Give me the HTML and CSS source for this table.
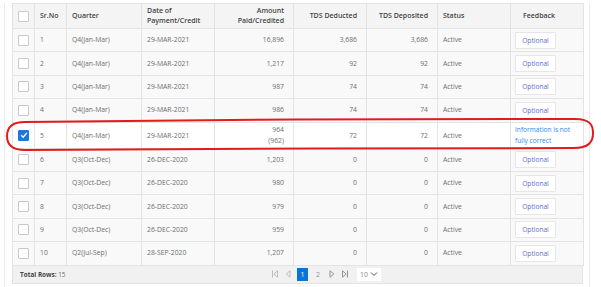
FILE: index.html
```html
<!DOCTYPE html>
<html>
<head>
<meta charset="utf-8">
<link rel="stylesheet" href="styles.css">
</head>
<body>
<div class="card">
  <table class="grid">
    <colgroup>
      <col class="c-cb"><col class="c-sr"><col class="c-q"><col class="c-d"><col class="c-a"><col class="c-t1"><col class="c-t2"><col class="c-s"><col class="c-f">
    </colgroup>
    <thead>
      <tr>
        <th class="cb-cell"><span class="cb"></span></th>
        <th>Sr.No</th>
        <th>Quarter</th>
        <th>Date of<br>Payment/Credit</th>
        <th class="num">Amount<br>Paid/Credited</th>
        <th class="num">TDS Deducted</th>
        <th class="num">TDS Deposited</th>
        <th>Status</th>
        <th class="fb-head">Feedback</th>
      </tr>
    </thead>
    <tbody>
      <tr><td class="cb-cell"><span class="cb"></span></td><td>1</td><td>Q4(Jan-Mar)</td><td>29-MAR-2021</td><td class="num">16,896</td><td class="num">3,686</td><td class="num">3,686</td><td>Active</td><td class="fb"><span class="btn">Optional</span></td></tr>
      <tr><td class="cb-cell"><span class="cb"></span></td><td>2</td><td>Q4(Jan-Mar)</td><td>29-MAR-2021</td><td class="num">1,217</td><td class="num">92</td><td class="num">92</td><td>Active</td><td class="fb"><span class="btn">Optional</span></td></tr>
      <tr><td class="cb-cell"><span class="cb"></span></td><td>3</td><td>Q4(Jan-Mar)</td><td>29-MAR-2021</td><td class="num">987</td><td class="num">74</td><td class="num">74</td><td>Active</td><td class="fb"><span class="btn">Optional</span></td></tr>
      <tr><td class="cb-cell"><span class="cb"></span></td><td>4</td><td>Q4(Jan-Mar)</td><td>29-MAR-2021</td><td class="num">986</td><td class="num">74</td><td class="num">74</td><td>Active</td><td class="fb"><span class="btn">Optional</span></td></tr>
      <tr class="sel"><td class="cb-cell"><span class="cb on"><svg viewBox="0 0 10 10" width="10" height="10"><path d="M2.2 5.2 L4.2 7.2 L7.9 2.9" fill="none" stroke="#fff" stroke-width="1.4"/></svg></span></td><td>5</td><td>Q4(Jan-Mar)</td><td>29-MAR-2021</td><td class="num">964<br>(962)</td><td class="num">72</td><td class="num">72</td><td>Active</td><td class="fb fb-link">Information is not<br>fully correct</td></tr>
      <tr><td class="cb-cell"><span class="cb"></span></td><td>6</td><td>Q3(Oct-Dec)</td><td>26-DEC-2020</td><td class="num">1,203</td><td class="num">0</td><td class="num">0</td><td>Active</td><td class="fb"><span class="btn">Optional</span></td></tr>
      <tr><td class="cb-cell"><span class="cb"></span></td><td>7</td><td>Q3(Oct-Dec)</td><td>26-DEC-2020</td><td class="num">980</td><td class="num">0</td><td class="num">0</td><td>Active</td><td class="fb"><span class="btn">Optional</span></td></tr>
      <tr><td class="cb-cell"><span class="cb"></span></td><td>8</td><td>Q3(Oct-Dec)</td><td>26-DEC-2020</td><td class="num">979</td><td class="num">0</td><td class="num">0</td><td>Active</td><td class="fb"><span class="btn">Optional</span></td></tr>
      <tr><td class="cb-cell"><span class="cb"></span></td><td>9</td><td>Q3(Oct-Dec)</td><td>26-DEC-2020</td><td class="num">959</td><td class="num">0</td><td class="num">0</td><td>Active</td><td class="fb"><span class="btn">Optional</span></td></tr>
      <tr><td class="cb-cell"><span class="cb"></span></td><td>10</td><td>Q2(Jul-Sep)</td><td>28-SEP-2020</td><td class="num">1,207</td><td class="num">0</td><td class="num">0</td><td>Active</td><td class="fb"><span class="btn">Optional</span></td></tr>
    </tbody>
  </table>
  <div class="footer">
    <div class="total"><b>Total Rows:</b> 15</div>
    <div class="pager">
      <svg class="pi" viewBox="0 0 8 10" width="8" height="10"><path d="M1.5 1.5 V8.5 M6.5 1.8 L2.8 5 L6.5 8.2 Z" fill="none" stroke="#b8b8b8" stroke-width="0.9"/></svg>
      <svg class="pi" viewBox="0 0 8 10" width="8" height="10"><path d="M6 1.8 L2.2 5 L6 8.2 Z" fill="none" stroke="#b8b8b8" stroke-width="0.9"/></svg>
      <span class="pg on">1</span>
      <span class="pg">2</span>
      <svg class="pi" viewBox="0 0 8 10" width="8" height="10"><path d="M2 1.8 L5.8 5 L2 8.2 Z" fill="none" stroke="#8a8a8a" stroke-width="0.9"/></svg>
      <svg class="pi" viewBox="0 0 8 10" width="8" height="10"><path d="M1.5 1.8 L5.2 5 L1.5 8.2 Z M6.5 1.5 V8.5" fill="none" stroke="#8a8a8a" stroke-width="0.9"/></svg>
      <span class="size">10 <svg viewBox="0 0 8 6" width="8" height="6"><path d="M1 1.5 L4 4.5 L7 1.5" fill="none" stroke="#555" stroke-width="1"/></svg></span>
    </div>
  </div>
</div>
<svg class="mark" viewBox="0 0 590 34" width="590" height="34"><path d="M20 4 C150 2 450 0 570 1 C586 1 588 8 588 15 C588 24 584 30 568 30 C420 30 150 31 20 32 C8 32 2 27 2 18 C2 9 8 4 20 4 Z" fill="none" stroke="#e41b1b" stroke-width="2"/></svg>
</body>
</html>
```
FILE: styles.css
```css
html, body { margin: 0; padding: 0; background: #fff; }
body {
  font-family: "Open Sans", "Liberation Sans", sans-serif;
  font-size: 6.8px;
  color: #6e6e6e;
  width: 601px;
  height: 287px;
  overflow: hidden;
  position: relative;
}
.card {
  margin: 3px 10px 0 4px;
  padding: 0 6px 3px 7px;
  border-left: 1px solid #ececec;
  border-right: 1px solid #ececec;
  border-bottom: 1px solid #e4e4e4;
  width: 571px;
}
.grid {
  border-collapse: collapse;
  table-layout: fixed;
  width: 571px;
}
.c-cb { width: 22px; }
.c-sr { width: 32px; }
.c-q { width: 75px; }
.c-d { width: 73px; }
.c-a { width: 79px; }
.c-t1 { width: 73px; }
.c-t2 { width: 71px; }
.c-s { width: 73px; }
.c-f { width: 73px; }
.grid th, .grid td {
  border: 1px solid #e3e3e3;
  padding: 0 5px;
  text-align: left;
  vertical-align: middle;
  line-height: 10px;
  white-space: nowrap;
}
.grid th {
  background: #f4f4f4;
  color: #444;
  font-weight: 600;
  font-size: 7px;
  height: 24px;
}
.grid td { height: 22.4px; background: #f9f9f9; }
.grid tr.sel td { height: 25px; background: #fff; line-height: 11px; }
.grid .num { text-align: right; padding-right: 9px; }
.grid .fb { padding-left: 4px; }
.grid .fb-head { padding-left: 12px; }
.cb-cell { padding: 0 !important; text-align: center !important; }
.cb {
  display: inline-block;
  width: 9px;
  height: 9px;
  border: 1px solid #c9c9c9;
  background: #fff;
  border-radius: 1px;
  vertical-align: middle;
}
.cb.on { background: #1e78d8; border-color: #1e78d8; position: relative; }
.cb.on svg { position: absolute; left: -0.5px; top: -0.5px; }
.btn {
  display: inline-block;
  width: 39px;
  height: 15px;
  line-height: 15px;
  text-align: center;
  border: 1px solid #e6e6e6;
  background: #fff;
  color: #5a6cc8;
  font-size: 6.6px;
  border-radius: 1px;
}
.fb-link { color: #2e8ae6; font-size: 6.6px; }
.footer {
  display: flex;
  align-items: center;
  height: 17px;
  background: #f1f1f1;
  border: 1px solid #e3e3e3;
  border-top: none;
  position: relative;
}
.total { padding-left: 7px; color: #6e6e6e; font-size: 6.4px; }
.total b { color: #444; font-weight: 700; }
.pager {
  position: absolute;
  left: 258px;
  top: 0;
  height: 17px;
  display: flex;
  align-items: center;
  gap: 5px;
}
.pi { display: block; }
.pg { color: #999; width: 10px; text-align: center; line-height: 13px; font-size: 7px; }
.pg.on { background: #0a74d6; color: #fff; height: 13px; width: 11px; }
.size {
  margin-left: 3px;
  background: #fff;
  padding: 0 3px;
  height: 13px;
  display: flex;
  align-items: center;
  gap: 2px;
  color: #888;
  font-size: 6.8px;
}
.mark {
  position: absolute;
  left: 5px;
  top: 118px;
}
```
